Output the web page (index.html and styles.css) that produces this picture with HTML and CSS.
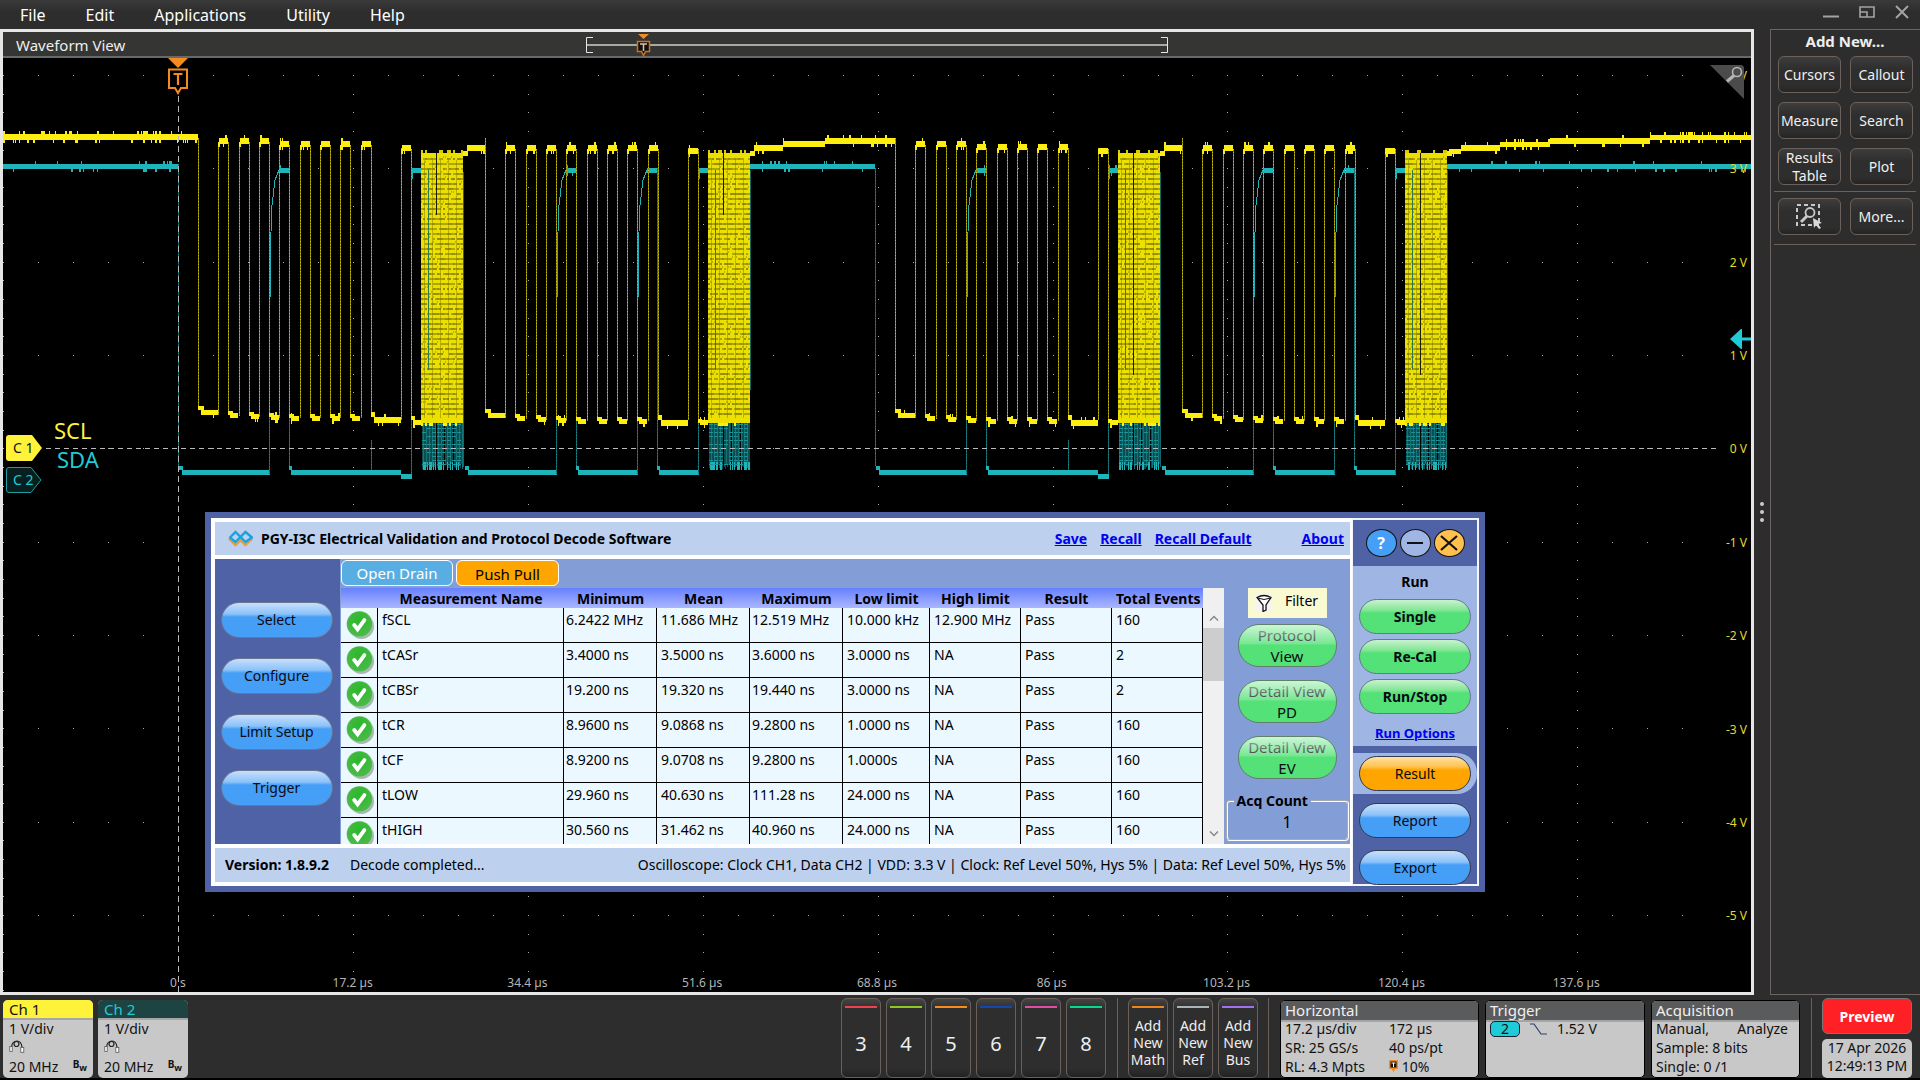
FILE: index.html
```html
<!DOCTYPE html>
<html lang="en">
<head>
<meta charset="utf-8">
<title>Waveform View</title>
<link rel="stylesheet" href="styles.css">
</head>
<body>
<svg class="defs" width="0" height="0" aria-hidden="true">
  <defs>
    <radialGradient id="okFill" cx="50%" cy="35%" r="65%">
      <stop offset="0" stop-color="#2bb82b"/><stop offset="1" stop-color="#4cba4a"/>
    </radialGradient>
    <symbol id="ok" viewBox="0 0 30 31">
      <circle cx="16" cy="17" r="13" fill="#8d9a94" opacity=".7"/>
      <circle cx="14" cy="14.500" r="13.500" fill="#a9cfae"/>
      <circle cx="14" cy="14.500" r="13" fill="url(#okFill)"/>
      <path d="M8.500 15.500l3.500 4.500 7-9.500" fill="none" stroke="#fff" stroke-width="4" stroke-linecap="round"/>
    </symbol>
    <symbol id="probe" viewBox="0 0 16 13">
      <path d="M2.500 7C3 3 5 1 8 1s4.500 2 5 6" fill="none" stroke="#222" stroke-width="1.200"/>
      <circle cx="7.500" cy="4" r="2.500" fill="none" stroke="#222" stroke-width="1.200"/>
      <rect x=".8" y="6.500" width="2.400" height="5" fill="#fff" stroke="#555" stroke-width=".8"/>
      <rect x="11.800" y="7.500" width="3" height="4.800" fill="#fff" stroke="#555" stroke-width=".8"/>
    </symbol>
  </defs>
</svg>

<header class="menubar">
  <nav class="menus">
    <button>File</button><button>Edit</button><button>Applications</button><button>Utility</button><button>Help</button>
  </nav>
  <div class="winctl">
    <button aria-label="Minimize"><svg width="16" height="14"><path d="M0 11.500h16" stroke="#a3a3a3" stroke-width="2"/></svg></button>
    <button aria-label="Restore"><svg width="16" height="14"><path d="M1 2h14v10H1zM1 7h7v5" fill="none" stroke="#a3a3a3" stroke-width="1.600"/></svg></button>
    <button aria-label="Close"><svg width="14" height="14"><path d="M1 1l12 12M13 1L1 13" stroke="#a3a3a3" stroke-width="2"/></svg></button>
  </div>
</header>

<main class="workspace">
  <section class="view">
    <div class="viewbar">
      <h1>Waveform View</h1>
      <svg class="record" viewBox="0 0 582 24" width="582" height="24">
        <path d="M7 4.500H.5v15H7M575 4.500h6.500v15H575" fill="none" stroke="#e6e6e6"/>
        <path d="M1 12h580" stroke="#a9a9a4" stroke-width="2"/>
        <path d="M52 1h11l-5.500 5z" fill="#f58a1f"/>
        <path d="M51.500 8.500h12v10h-4l-2 4-2-4h-4z" fill="#111" stroke="#c9731f" stroke-width="1.500"/>
        <path d="M54 11h7M57.500 11v7" stroke="#d8c3ad" stroke-width="1.500"/>
      </svg>
    </div>
    <div class="plot">
      <svg class="traces" id="traces" viewBox="3 58 1748 934" preserveAspectRatio="none" shape-rendering="crispEdges"></svg>

      <span class="vlabel" style="top:1.9%">4 V</span>
      <span class="vlabel" style="top:11.9%">3 V</span>
      <span class="vlabel" style="top:21.9%">2 V</span>
      <span class="vlabel" style="top:31.9%">1 V</span>
      <span class="vlabel" style="top:41.9%">0 V</span>
      <span class="vlabel" style="top:51.9%">-1 V</span>
      <span class="vlabel" style="top:61.9%">-2 V</span>
      <span class="vlabel" style="top:71.9%">-3 V</span>
      <span class="vlabel" style="top:81.9%">-4 V</span>
      <span class="vlabel" style="top:91.9%">-5 V</span>

      <span class="tlabel" style="left:10%">0 s</span>
      <span class="tlabel" style="left:20%">17.2 µs</span>
      <span class="tlabel" style="left:30%">34.4 µs</span>
      <span class="tlabel" style="left:40%">51.6 µs</span>
      <span class="tlabel" style="left:50%">68.8 µs</span>
      <span class="tlabel" style="left:60%">86 µs</span>
      <span class="tlabel" style="left:70%">103.2 µs</span>
      <span class="tlabel" style="left:80%">120.4 µs</span>
      <span class="tlabel" style="left:90%">137.6 µs</span>

      <svg class="trigmark" width="22" height="40" viewBox="0 0 22 40">
        <path d="M1 0h20L11 10z" fill="#f58a1f"/>
        <path d="M2 11.500h18v18.500h-6l-3 5-3-5H2z" fill="#000" stroke="#f58a1f" stroke-width="2"/>
        <path d="M6.500 16h9M11 16v11" stroke="#f58a1f" stroke-width="2.200"/>
      </svg>
      <svg class="zoomcorner" width="34" height="34" viewBox="0 0 34 34">
        <path d="M0 0h32l2 2v32z" fill="#4b4b4b"/>
        <circle cx="27" cy="7" r="4.500" fill="none" stroke="#b5b5b5" stroke-width="1.600"/>
        <path d="M24 10.500l-7 6" stroke="#b5b5b5" stroke-width="3"/>
      </svg>
      <svg class="levelmark" width="21" height="20" viewBox="0 0 21 20">
        <path d="M0 10L11 0h1v8.500h9v3h-9V20h-1z" fill="#1fcbd6"/>
      </svg>
      <div class="badge c1"><svg viewBox="0 0 36 26" width="36" height="26"><path d="M3 0h23l10 13-10 13H3q-3 0-3-3V3q0-3 3-3z" fill="#fff23a"/></svg><span>C 1</span></div>
      <div class="badge c2"><svg viewBox="0 0 36 26" width="36" height="26"><path d="M3 .5h22l10 12.500-10 12.500H3q-2.500 0-2.500-2.500V3Q.5.500 3 .5z" fill="#07201f" stroke="#1f9da3"/></svg><span>C 2</span></div>
      <span class="trace-name scl">SCL</span>
      <span class="trace-name sda">SDA</span>

      <section class="dialog" aria-label="PGY-I3C Electrical Validation and Protocol Decode Software">
        <div class="dmain">
          <div class="dhead">
            <svg width="25" height="17" viewBox="0 0 25 17">
              <path d="M1 8.500l6.500 6.500 5-5 5 5 6.500-6.500" fill="none" stroke="#f39a35" stroke-width="2.600"/>
              <path d="M1.500 8L7.500 2l10 10L24 7.500 17.500 2l-10 10L2 7.500" fill="none" stroke="#18a3e0" stroke-width="2.400"/>
            </svg>
            <h2>PGY-I3C Electrical Validation and Protocol Decode Software</h2>
            <a href="#save">Save</a><a href="#recall">Recall</a><a href="#default">Recall Default</a><a class="about" href="#about">About</a>
          </div>
          <div class="dbody">
            <nav class="side">
              <button class="pill blue">Select</button>
              <button class="pill blue">Configure</button>
              <button class="pill blue">Limit Setup</button>
              <button class="pill blue">Trigger</button>
            </nav>
            <div class="results">
              <div class="tabs"><button class="tab od">Open Drain</button><button class="tab pp">Push Pull</button></div>
              <div class="scroller">
                <div class="tablebox">
                  <table>
                    <colgroup><col class="w-ok"><col><col class="w93"><col class="w93"><col class="w93"><col class="w87"><col class="w91"><col class="w91"><col class="w91"></colgroup>
                    <thead><tr><th></th><th>Measurement Name</th><th>Minimum</th><th>Mean</th><th>Maximum</th><th>Low limit</th><th>High limit</th><th>Result</th><th>Total Events</th></tr></thead>
                    <tbody>
                      <tr><td><svg class="ok"><use href="#ok"/></svg></td><td>fSCL</td><td>6.2422 MHz</td><td>11.686 MHz</td><td>12.519 MHz</td><td>10.000 kHz</td><td>12.900 MHz</td><td>Pass</td><td>160</td></tr>
                      <tr><td><svg class="ok"><use href="#ok"/></svg></td><td>tCASr</td><td>3.4000 ns</td><td>3.5000 ns</td><td>3.6000 ns</td><td>3.0000 ns</td><td>NA</td><td>Pass</td><td>2</td></tr>
                      <tr><td><svg class="ok"><use href="#ok"/></svg></td><td>tCBSr</td><td>19.200 ns</td><td>19.320 ns</td><td>19.440 ns</td><td>3.0000 ns</td><td>NA</td><td>Pass</td><td>2</td></tr>
                      <tr><td><svg class="ok"><use href="#ok"/></svg></td><td>tCR</td><td>8.9600 ns</td><td>9.0868 ns</td><td>9.2800 ns</td><td>1.0000 ns</td><td>NA</td><td>Pass</td><td>160</td></tr>
                      <tr><td><svg class="ok"><use href="#ok"/></svg></td><td>tCF</td><td>8.9200 ns</td><td>9.0708 ns</td><td>9.2800 ns</td><td>1.0000s</td><td>NA</td><td>Pass</td><td>160</td></tr>
                      <tr><td><svg class="ok"><use href="#ok"/></svg></td><td>tLOW</td><td>29.960 ns</td><td>40.630 ns</td><td>111.28 ns</td><td>24.000 ns</td><td>NA</td><td>Pass</td><td>160</td></tr>
                      <tr><td><svg class="ok"><use href="#ok"/></svg></td><td>tHIGH</td><td>30.560 ns</td><td>31.462 ns</td><td>40.960 ns</td><td>24.000 ns</td><td>NA</td><td>Pass</td><td>160</td></tr>
                    </tbody>
                  </table>
                </div>
                <div class="sbar">
                  <svg width="10" height="6"><path d="M1 5.500l4-4 4 4" fill="none" stroke="#8a8a8a" stroke-width="1.500"/></svg>
                  <div class="thumb"></div>
                  <svg width="10" height="6"><path d="M1 .5l4 4 4-4" fill="none" stroke="#8a8a8a" stroke-width="1.500"/></svg>
                </div>
              </div>
            </div>
            <div class="tools">
              <button class="filter"><svg width="16" height="18" viewBox="0 0 16 18"><rect width="16" height="18" fill="#f4f4f4"/><path d="M1 3.500Q8-.5 15 3.500L10 11v5l-3 1.500V11z" fill="#fff" stroke="#111" stroke-width="1.300"/><path d="M1.500 4q6.500 3 13 0" fill="none" stroke="#111"/></svg>Filter</button>
              <button class="pill green tall">Protocol View</button>
              <button class="pill green tall">Detail View PD</button>
              <button class="pill green tall">Detail View EV</button>
              <fieldset><legend>Acq Count</legend><output>1</output></fieldset>
            </div>
          </div>
          <div class="dfoot"><b>Version: 1.8.9.2</b><span>Decode completed...</span><span class="cfg">Oscilloscope: Clock CH1, Data CH2 | VDD: 3.3 V | Clock: Ref Level 50%, Hys 5% | Data: Ref Level 50%, Hys 5%</span></div>
        </div>
        <div class="dright">
          <div class="rounds">
            <button class="q" aria-label="Help">?</button>
            <button class="m" aria-label="Minimize"><svg width="18" height="18"><path d="M1 9h16" stroke="#111" stroke-width="2"/></svg></button>
            <button class="x" aria-label="Close"><svg width="18" height="18"><path d="M1 2l16 14M17 2L1 16" stroke="#111" stroke-width="2.200"/></svg></button>
          </div>
          <div class="run">
            <b>Run</b>
            <button class="pill green">Single</button>
            <button class="pill green">Re-Cal</button>
            <button class="pill green">Run/Stop</button>
            <a href="#options">Run Options</a>
          </div>
          <div class="pages">
            <div class="active"><button class="pill orange">Result</button></div>
            <button class="pill blue">Report</button>
            <button class="pill blue">Export</button>
          </div>
        </div>
      </section>
    </div>
  </section>

  <div class="splitter"><i></i><i></i><i></i></div>

  <aside class="panel">
    <h2>Add New...</h2>
    <div class="pgrid">
      <button>Cursors</button><button>Callout</button>
      <button>Measure</button><button>Search</button>
      <button>Results Table</button><button>Plot</button>
    </div>
    <hr>
    <div class="pgrid last">
      <button aria-label="Zoom area"><svg width="27" height="25" viewBox="0 0 27 25"><path d="M1 1h22v20H1z" fill="none" stroke="#c8c8c8" stroke-width="2" stroke-dasharray="4 3"/><circle cx="14" cy="8.500" r="4.500" fill="#2e2e2e" stroke="#c8c8c8" stroke-width="1.800"/><path d="M11 12l-6 6" stroke="#c8c8c8" stroke-width="3"/><path d="M17 14l9 5-4 1 3 4-2 1-3-4-2 3z" fill="#d8d8d8"/></svg></button><button>More...</button>
    </div>
    <hr>
  </aside>
</main>

<footer class="bottombar">
  <div class="chan ch1"><h3>Ch 1</h3><p>1 V/div</p><p><svg width="16" height="13"><use href="#probe"/></svg></p><p class="bw">20 MHz <b>B<sub>w</sub></b></p></div>
  <div class="chan ch2"><h3>Ch 2</h3><p>1 V/div</p><p><svg width="16" height="13"><use href="#probe"/></svg></p><p class="bw">20 MHz <b>B<sub>w</sub></b></p></div>
  <div class="slots">
    <button class="slot k3">3</button><button class="slot k4">4</button><button class="slot k5">5</button><button class="slot k6">6</button><button class="slot k7">7</button><button class="slot k8">8</button>
  </div>
  <div class="slots add">
    <button class="slot kmath">Add New Math</button><button class="slot kref">Add New Ref</button><button class="slot kbus">Add New Bus</button>
  </div>
  <div class="info horiz"><h3>Horizontal</h3>
    <div class="pairs"><span>17.2 µs/div</span><span>172 µs</span><span>SR: 25 GS/s</span><span>40 ps/pt</span><span>RL: 4.3 Mpts</span><span><svg width="9" height="12" viewBox="0 0 9 12"><path d="M0 0h9v9H6.500L4.500 12l-2-3H0z" fill="#f58a1f"/><path d="M1.500 1.500h6v6h-6z" fill="#111"/><path d="M2.500 3h4M4.500 3v4" stroke="#fff"/></svg> 10%</span></div>
  </div>
  <div class="info trig"><h3>Trigger</h3>
    <p><span class="src">2</span><svg width="17" height="12" viewBox="0 0 17 12"><path d="M0 1h4l7 10h6" fill="none" stroke="#2d3e6e" stroke-width="1.200"/></svg><span>1.52 V</span></p>
  </div>
  <div class="info acq"><h3>Acquisition</h3>
    <p class="split"><span>Manual,</span><span>Analyze</span></p><p>Sample: 8 bits</p><p>Single: 0 /1</p>
  </div>
  <div class="status"><button class="preview">Preview</button><div class="clock">17 Apr 2026<br>12:49:13 PM</div></div>
</footer>
<script src="traces.js"></script>
</body>
</html>
```
FILE: styles.css
```css
* { box-sizing: border-box; }
body { margin: 0; height: 100vh; display: flex; flex-direction: column; overflow: hidden; background: #2d2d2d; color: #eee; font: 15px/20px "Noto Sans", sans-serif; }
button { font: inherit; color: inherit; padding: 0; border: 0; background: none; }
h1, h2, h3, p { margin: 0; font-size: inherit; font-weight: 400; }
.defs { position: absolute; }
svg { flex: none; }

.menubar { height: 29px; flex: none; display: flex; justify-content: space-between; background: linear-gradient(#3a3a3a, #2d2d2d 12px); font-size: 16px; color: #fff; }
.menus { display: flex; gap: 40px; padding-left: 20px; }
.winctl { display: flex; gap: 20px; padding: 0 11px 5px 0; align-items: center; }
.winctl svg { display: block; }

.workspace { flex: 1; min-height: 0; display: flex; }
.view { flex: 1; min-width: 0; display: flex; flex-direction: column; border: 3px solid #e6e6e6; }
.viewbar { height: 26px; flex: none; position: relative; display: flex; align-items: center; padding: 1px 0 0 13px; background: #353533; border-bottom: 2px solid #666a6b; }
.record { position: absolute; left: 583px; top: 1px; }
.plot { flex: 1; position: relative; overflow: hidden; background: #000; }
.traces { position: absolute; inset: 0; width: 100%; height: 100%; }
.vlabel { position: absolute; right: 4px; transform: translateY(-50%); font-size: 12px; line-height: 16px; color: #e3da2e; }
.tlabel { position: absolute; bottom: 0; transform: translateX(-50%); font-size: 12px; line-height: 18px; color: #b5b5b5; }
.trigmark { position: absolute; left: 10%; top: 0; margin-left: -11px; }
.zoomcorner { position: absolute; right: 7px; top: 7px; }
.levelmark { position: absolute; right: 0; top: 29%; }
.badge { position: absolute; left: 3px; width: 36px; height: 26px; }
.badge svg { position: absolute; left: 0; top: 0; }
.badge span { position: absolute; left: 7px; top: 3px; font-size: 14px; }
.c1 { top: 40.4%; color: #111; }
.c2 { top: 43.8%; color: #1fcbd6; }
.trace-name { position: absolute; font-size: 22px; line-height: 28px; }
.scl { left: 51px; top: 38.300%; color: #fff23a; }
.sda { left: 54px; top: 41.400%; color: #1fcbd6; }

.dialog { position: absolute; left: 202px; top: 454px; width: 1280px; height: 380px; display: flex; padding: 6px; background: #5062a6; color: #000; font-size: 14px; }
.dmain { flex: 1; min-width: 0; display: flex; flex-direction: column; gap: 4px; padding: 4px 2px 4px 4px; background: #fff; }
.dhead { height: 33px; flex: none; display: flex; align-items: center; padding: 0 6px 0 13px; background: #bdd0ee; font-weight: 700; }
.dhead h2 { font-weight: 700; margin: 0 auto 0 8px; }
.dialog a { color: #0000f0; font-weight: 700; text-decoration: underline; }
.dhead a { margin-left: 13px; }
.dhead a.about { margin-left: 50px; }
.dbody { flex: 1; min-height: 0; display: flex; background: #839dd6; }
.side { width: 125px; display: flex; flex-direction: column; align-items: center; gap: 20px; padding: 43px 2px 0 0; background: #5062a6; }
.pill { width: 112px; height: 36px; border: 1px solid #6b7590; border-radius: 18px; flex: none; color: #0a0a14; }
.blue { background: linear-gradient(#c6dffb, #8cc2f9 11px, #469ff7 14px, #469ff7); }
.green { background: linear-gradient(#c8f3ce, #84e696 10px, #54e177 13px, #54e177); }
.orange { background: linear-gradient(#ffe2a6, #ffc14a 10px, #ffa500 13px, #ffa500); }
.results { flex: 1; min-width: 0; display: flex; flex-direction: column; }
.tabs { height: 29px; flex: none; display: flex; gap: 3px; padding: 1px 1px 2px; }
.tab { border: 1px solid #fff; border-radius: 6px; font-size: 15px; }
.od { width: 112px; background: #58aee3; color: #fff; }
.pp { width: 103px; background: #ffa500; padding-top: 2px; }
.scroller { flex: 1; min-height: 0; display: flex; padding-left: 1px; }
.tablebox { flex: 1; min-width: 0; overflow: hidden; background: #ecf8ff; }
table { width: 100%; table-layout: fixed; border-collapse: separate; border-spacing: 0; }
.w-ok { width: 37px; } .w93 { width: 93px; } .w87 { width: 87px; } .w91 { width: 91px; }
thead tr { height: 20px; background: linear-gradient(#6680ff, #aab6ff); }
th { height: 20px; padding: 2px 0 0; line-height: 18px; font-weight: 700; white-space: nowrap; }
th:last-child { text-align: left; padding-left: 4px; }
td { height: 35px; padding: 2px 0 0 4px; vertical-align: top; white-space: nowrap; border-right: 1px solid #000; border-bottom: 1px solid #000; }
td:nth-child(3), td:nth-child(5) { padding-left: 2px; }
td:first-child { padding: 2px 0 0 5px; }
.ok { display: block; width: 29px; height: 30px; }
.sbar { width: 21px; display: flex; flex-direction: column; align-items: center; padding: 27px 0 7px; background: #f0f0f0; }
.thumb { width: 21px; height: 53px; margin: 7px 0 auto; background: #cdcdcd; }
.tools { width: 126px; display: flex; flex-direction: column; align-items: center; padding-top: 29px; }
.filter { width: 79px; height: 30px; flex: none; display: flex; align-items: center; justify-content: center; gap: 13px; margin-bottom: 6px; background: #fafad2; line-height: 20px; padding-bottom: 5px; }
.filter svg { margin-top: 5px; }
.tall { position: relative; width: 99px; height: 43px; border-radius: 21px; border-color: #60806a; margin-bottom: 13px; padding: 0 4px; line-height: 21px; font-size: 15px; background: #54e177; }
.tall::after { content: ""; position: absolute; inset: 0; border-radius: 20px; background: linear-gradient(rgba(255,255,255,.7), rgba(255,255,255,.2) 19px, transparent 20px); }
fieldset { width: 123px; height: 50px; margin: -1px 0 0; padding: 0; border: 2px groove #fff; border-radius: 4px; }
legend { margin: 0 auto 0 6px; padding: 0 3px; font-weight: 700; line-height: 20px; }
output { display: block; text-align: center; font-size: 16px; line-height: 22px; }
.dfoot { height: 34px; flex: none; display: flex; align-items: center; gap: 21px; padding: 0 4px 0 10px; background: #bdd0ee; white-space: nowrap; }
.cfg { margin-left: auto; }
.dright { width: 127px; display: flex; flex-direction: column; background: #9fb5e3; border: 2px solid #f2f5fc; border-left-width: 1px; }
.rounds { height: 46px; flex: none; display: flex; align-items: center; justify-content: center; gap: 3px; background: #5062a6; }
.rounds button { width: 31px; height: 28px; display: flex; align-items: center; justify-content: center; border: 1px solid #111; border-radius: 50%; }
.q { background: #469ff7; color: #fff; font-weight: 700; font-size: 16px; }
.m { background: #9fb5e3; }
.x { background: #ffc04d; }
.run { flex: 1; display: flex; flex-direction: column; align-items: center; gap: 5px; padding-top: 6px; }
.run b { margin-bottom: 2px; }
.run .pill, .pages .pill { height: 35px; }
.run .pill { font-weight: 700; }
.run a { margin-top: 4px; font-size: 13px; }
.pages { height: 138px; flex: none; display: flex; flex-direction: column; align-items: center; gap: 12px; padding-top: 7px; background: #5062a6; }
.pages .pill { border-color: #333b50; }
.active { width: 100%; height: 41px; margin-bottom: -3px; display: flex; align-items: center; justify-content: center; background: #9fb5e3; border-radius: 0 20px 20px 0; flex: none; }

.splitter { width: 16px; display: flex; flex-direction: column; align-items: center; justify-content: center; gap: 4px; }
.splitter i { width: 4px; height: 4px; border-radius: 50%; background: #ccc; }
.panel { width: 150px; border: 1px solid #6b6460; border-right: 0; padding: 1px 4px 1px 3px; }
.panel h2 { text-align: center; font-weight: 700; margin-bottom: 5px; }
.pgrid { display: grid; grid-template-columns: 1fr 1fr; gap: 9px; padding: 0 3px 0 4px; }
.pgrid button { height: 37px; border: 1px solid #6b605a; border-radius: 6px; font-size: 14px; line-height: 18px; color: #f0f0f0; background: linear-gradient(#3d3d3d, #2e2e2e 12px, #2e2e2e 28px, #252525); }
.pgrid svg { vertical-align: middle; }
hr { margin: 6px 0; border: 0; border-top: 1px solid #6b605a; }
.last + hr { margin-top: 9px; }

.bottombar { height: 85px; flex: none; display: flex; align-items: flex-start; padding: 3px 8px 2px 3px; font-size: 14px; line-height: 19px; border-bottom: 2px solid #000; color: #111; }
.chan { width: 90px; height: 78px; margin: 2px 5px 0 0; border-radius: 5px; overflow: hidden; background: #c8c8c8; flex: none; }
.chan h3 { height: 20px; padding-left: 6px; font-size: 15px; line-height: 19px; border-bottom: 2px solid #a5a5a5; }
.chan p { height: 19px; padding-left: 6px; line-height: 17px; }
.ch1 h3 { background: #fff23a; } .ch2 h3 { background: #1e4343; color: #1fcbd6; }
.bw { display: flex; justify-content: space-between; padding-right: 6px; }
.bw b { font-size: 10px; line-height: 12px; } .bw sub { font-size: 9px; }
.slots { display: flex; gap: 5px; margin-left: auto; padding-right: 11px; height: 80px; flex: none; border-right: 1px solid #6b605a; }
.slots.add { margin: 0 11px 0 10px; padding-right: 10px; }
.slot { width: 40px; height: 80px; padding: 10px 0 0; border: 1px solid #6b605a; border-radius: 6px; color: #eee; font-size: 20px; background: linear-gradient(#444, #2e2e2e 10px, #2e2e2e 70px, #222); position: relative; }
.slot::before { content: ""; position: absolute; left: 3px; right: 3px; top: 7px; height: 2px; background: currentColor; }
.add .slot { font-size: 14px; line-height: 17px; padding-top: 8px; }
.k3::before { background: #f0414f; } .k4::before { background: #8cc820; } .k5::before { background: #f98b1b; }
.k6::before { background: #1246b0; } .k7::before { background: #dd4fa4; } .k8::before { background: #00dc8c; }
.kmath::before { background: #f08418; } .kref::before { background: #aab4b4; } .kbus::before { background: #a070f0; }
.info { height: 78px; margin: 2px 6px 0 0; border: 1px solid #000; border-radius: 5px; overflow: hidden; background: #c8c8c8; flex: none; }
.info h3 { height: 21px; padding-left: 4px; font-size: 15px; line-height: 19px; background: #5a5b5c; color: #f0f0f0; border-bottom: 2px solid #a5a5a5; }
.horiz { width: 199px; } .trig { width: 160px; } .acq { width: 149px; margin-right: 11px; }
.pairs { display: grid; grid-template-columns: 104px 1fr; line-height: 19px; padding-left: 4px; margin-top: -3px; }
.info p { padding-left: 4px; line-height: 19px; }
.info h3 + p { margin-top: -3px; }
.trig p { display: flex; align-items: center; gap: 10px; }
.src { width: 30px; height: 16px; line-height: 14px; text-align: center; background: #1fcbd6; border: 1px solid #123; border-radius: 5px; }
.split { display: flex; justify-content: space-between; padding-right: 11px; }
.status { height: 80px; padding-left: 10px; border-left: 1px solid #6b605a; display: flex; flex-direction: column; gap: 5px; }
.preview { width: 90px; height: 36px; border: 1px solid #777; border-radius: 6px; background: #ff2026; color: #fff; font-weight: 700; }
.clock { width: 90px; height: 39px; border-radius: 5px; background: #c8c8c8; text-align: center; line-height: 18px; white-space: nowrap; }
```
FILE: traces.js
```js
// Draws the graticule and both channel traces into the plot.
const svg = document.getElementById('traces');
const out = [];
let seed = 7;
const rnd = () => (seed = (seed * 16807) % 2147483647) / 2147483647;
const rect = (x, y, w, h, c) => out.push(`<rect x="${x}" y="${y}" width="${w}" height="${h}" fill="${c}"/>`);
const Y = '#fdee10', YD = '#948c00', T = '#1fb4ba', TD = '#12666a';

function band(x0, x1, y, h, c, noise) {
  rect(x0, y, x1 - x0, h, c);
  for (let x = x0; x < x1 - 1; x += 2) {
    const w = rnd() < .4 ? 2 : 1;
    if (rnd() < noise) rect(x, y - 3, w, 3, c);
    if (rnd() < noise) rect(x, y + h, w, 3, c);
  }
}
function edge(x, y0, y1, bright, dark) {
  x = Math.round(x);
  rect(x, Math.min(y0, y1), 1, Math.abs(y1 - y0), dark);
  out.push(`<path d="M${x + .5} ${Math.min(y0, y1)}V${Math.max(y0, y1)}" stroke="${bright}" stroke-dasharray="1 2" opacity=".5"/>`);
}

// graticule
for (let i = 0; i < 10; i++) for (let k = 1; k < 49; k++) rect(Math.round(3.5 + k * 34.97), Math.round(75 + i * 93.35), 1, 1, '#aaa');
for (let k = 0; k < 50; k++) {
  const y = Math.round(75 + k * 18.67);
  rect(3, y, 1, 1, '#aaa');
  if (k < 49) for (let i = 2; i < 10; i++) rect(Math.round(3.5 + i * 174.85), y, 1, 1, '#aaa');
}

const starts = [198, 485, 895, 1182];

// SDA
band(3, 178, 164, 5, T, .12);
edge(178, 164, 470, T, TD);
starts.forEach((s, n) => {
  const two = n % 2;
  const begin = [179, 465, 876, 1162][n];
  const rise = x => {
    edge(x, 385, 474, T, TD);
    out.push(`<path d="M${x + .5} 385V330L${x + 2} 232 ${x + 3} 205 ${x + 6} 180 ${x + 10} 170" fill="none" stroke="${T}"/>`);
    band(x + 10, x + 20, 168, 5, T, .1);
    edge(x + 20, 168, 466, T, TD);
    rect(x + 20, 466, 3, 4, T);
  };
  rect(begin, 466, 4, 4, T);
  band(begin + 3, s + 72, 470, 5, T, 0);
  rise(s + 71);
  if (two) {
    band(s + 93, s + 153, 470, 5, T, 0);
    rise(s + 152);
    band(s + 174, s + 214, 470, 5, T, 0);
  } else {
    band(s + 93, s + 203, 470, 5, T, 0);
    edge(s + 173, 440, 470, T, TD);
    rect(s + 203, 474, 11, 5, T);
  }
  edge(s + 213, 172, 474, T, TD);
  rect(s + 213, 172, 2, 7, T);
  band(s + 214, s + 223, 168, 5, T, .1);
  // fast section below the clock
  for (let x = s + 224; x < s + 265; x++) {
    if ([14, 22, 31].includes(x - s - 224)) continue;
    rect(x, 420, 1, 44 + Math.floor(rnd() * 6), x % 3 ? '#0d4d50' : '#147478');
    if (rnd() < .5) rect(x, 462, 1, 8, T);
  }
  for (let y = 424; y < 466; y += 4) for (let x = s + 224; x < s + 262; x += 5) if (rnd() < .8) rect(x, y, 4, 1, '#1a9298');
  rect(s + 265, two ? 170 : 172, 1, two ? 220 : 295, TD);
});
band(750, 875, 164, 5, T, .12);
edge(875, 168, 466, T, TD);
band(1447, 1751, 164, 5, T, .08);

// SCL
band(3, 198, 134, 6, Y, .2);
starts.forEach((s, n) => {
  const d = n ? 3 : 0;
  edge(s, 138, 406 + d, Y, YD);
  rect(s, 406 + d, 6, 4, Y);
  band(s + 3, s + 20, 410 + d, 5, Y, .1);
  for (let i = 0; i < 8; i++) {
    const x = Math.round(s + 20.4 + i * 20.3);
    const top = 138 + (i > 2 ? 3 : 0) + (n === 1 || n === 3 ? 7 - (i > 2 ? 3 : 0) : d);
    const low = 411 + d + Math.min(i, 3);
    edge(x, top + 4, low + 4, Y, YD);
    rect(x, top + 4, 2, 5, Y);
    band(x + 1, x + 10, top, 6, Y, .2);
    edge(x + 10, top + 4, low, Y, YD);
    if (i < 7) {
      rect(x + 10, low, 5, 4, Y);
      band(x + 12, x + 20, low + 2, 5, Y, .15);
    } else {
      rect(x + 10, 412 + d, 4, 5, Y);
      band(x + 13, s + 203, 417 + d, 6, Y, .15);
    }
  }
  edge(s + 203, 148, 420, Y, YD);
  rect(s + 203, 149, 2, 5, Y);
  band(s + 204, s + 213, 145 + d, 6, Y, .15);
  edge(s + 213, 149, 420, Y, YD);
  rect(s + 213, 416 + d, 4, 4, Y);
  band(s + 215, s + 223, 420, 5, Y, .2);
  // fast clock section
  const x0 = s + 223;
  rect(x0, 153, 42, 270, '#ece000');
  for (let y = 158; y < 418; y += 5) {
    for (let x = x0; x < x0 + 41; x += 2) {
      const r = rnd();
      if (r < .82) rect(x, y, 2, 2, r < .4 ? '#988f00' : '#aea600');
      else if (r < .9) rect(x, y - 2, 1, 2, '#b9b000');
    }
  }
  for (let x = x0 + 3; x < x0 + 41; x += 8) out.push(`<rect x="${x}" y="160" width="1" height="258" fill="#6f6900" opacity=".4"/>`);
  rect(x0 + 15, 153, 1, n < 2 ? 62 : 222, '#1b1b00');
  rect(x0 + 7, 170, 1, 200, '#2b7a55');
  for (let x = x0; x < x0 + 42; x += 2) { if (rnd() < .35) rect(x, 150, 2, 3, '#d8cc00'); if (rnd() < .4) rect(x, 423, 2, 3, Y); }
  rect(s + 265, 151, 5, 5, Y);
});
band(467, 485, 145, 6, Y, .1);
band(754, 783, 145, 6, Y, .05);
band(783, 825, 141, 6, Y, .05);
band(825, 895, 138, 6, Y, .2);
band(1164, 1182, 145, 6, Y, .05);
band(1449, 1461, 149, 5, Y, .05);
band(1461, 1500, 145, 6, Y, .1);
band(1500, 1550, 142, 5, Y, .2);
band(1550, 1650, 138, 6, Y, .1);
band(1650, 1751, 135, 5, Y, .25);

// trigger position and zero volt lines
out.push('<path d="M178.500 96V992" stroke="#bbb" stroke-dasharray="6 4"/>');
out.push('<path d="M46 448.500H1720" stroke="#bbb" stroke-dasharray="5 4"/>');
svg.innerHTML = out.join('');
```
